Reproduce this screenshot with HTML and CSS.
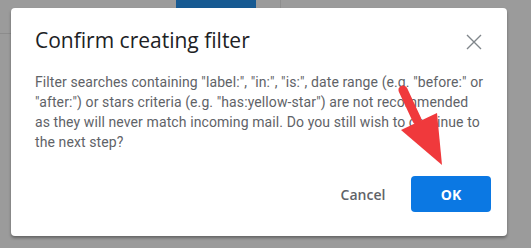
FILE: index.html
```html
<!DOCTYPE html>
<html lang="en">
<head>
<meta charset="UTF-8">
<title>Confirm creating filter</title>
<link rel="stylesheet" href="styles.css">
</head>
<body>
<div class="backdrop">
    <div class="topbar">
        <div class="top-left"></div>
        <div class="top-blue"></div>
        <div class="top-mid"></div>
        <div class="top-right"></div>
    </div>
    <div class="dialog">
        <div class="dialog-head">
            <h2>Confirm creating filter</h2>
            <span class="close">
                <svg width="16" height="16" viewBox="0 0 16 16"><path d="M1 1L15 15M15 1L1 15" stroke="#80868b" stroke-width="1.4" fill="none"/></svg>
            </span>
        </div>
        <p class="message">Filter searches containing "label:", "in:", "is:", date range (e.g. "before:" or<br>"after:") or stars criteria (e.g. "has:yellow-star") are not recommended<br>as they will never match incoming mail. Do you still wish to continue to<br>the next step?</p>
        <div class="actions">
            <button class="btn cancel">Cancel</button>
            <button class="btn ok">OK</button>
        </div>
    </div>
    <svg class="arrow" width="60" height="90" viewBox="0 0 60 90">
        <path d="M5 6L19 36" stroke="#f0393c" stroke-width="9" stroke-linecap="round" fill="none"/>
        <polygon points="3,46 39,29 44,81" fill="#f0393c"/>
    </svg>
</div>
</body>
</html>
```

FILE: styles.css
```css
body {
    margin: 0;
    width: 531px;
    height: 248px;
    overflow: hidden;
    background: #9b9b9b;
    font-family: Roboto, "Liberation Sans", sans-serif;
}
.backdrop {
    position: relative;
    width: 531px;
    height: 248px;
}
.topbar {
    display: flex;
    height: 34px;
}
.top-left {
    width: 176px;
    border-bottom: 1px solid #8c8c8c;
    height: 33px;
}
.top-blue {
    width: 80px;
    height: 8px;
    background: #175a92;
}
.top-mid {
    width: 24px;
}
.top-right {
    flex: 1;
    border-left: 1px solid #8e8e8e;
}
.dialog {
    position: absolute;
    left: 11px;
    top: 8px;
    width: 496px;
    height: 228px;
    box-sizing: border-box;
    background: #fff;
    border-radius: 4px;
    box-shadow: 0 2px 3px rgba(0, 0, 0, 0.35);
    padding: 0 16px 24px 24px;
    display: flex;
    flex-direction: column;
}
.dialog-head {
    display: flex;
    justify-content: space-between;
    align-items: center;
    height: 54px;
    padding-top: 10px;
    box-sizing: border-box;
}
.dialog-head h2 {
    margin: 0;
    font-family: "Open Sans", sans-serif;
    font-weight: 400;
    font-size: 21px;
    color: #202124;
}
.close {
    display: flex;
    margin-right: 9px;
    margin-top: 4px;
}
.message {
    margin: 10px 0 0 0;
    font-size: 14px;
    line-height: 20px;
    color: #5f6368;
    letter-spacing: 0.1px;
}
.actions {
    margin-top: auto;
    display: flex;
    justify-content: flex-end;
    gap: 8px;
}
.btn {
    width: 80px;
    height: 36px;
    border: none;
    border-radius: 4px;
    font-family: "Open Sans", sans-serif;
    font-size: 14px;
    font-weight: 600;
    cursor: pointer;
}
.cancel {
    background: #fff;
    color: #5f6368;
}
.ok {
    background: #0b78e3;
    color: #fff;
    font-weight: 700;
}
.arrow {
    position: absolute;
    left: 398px;
    top: 84px;
}
```
